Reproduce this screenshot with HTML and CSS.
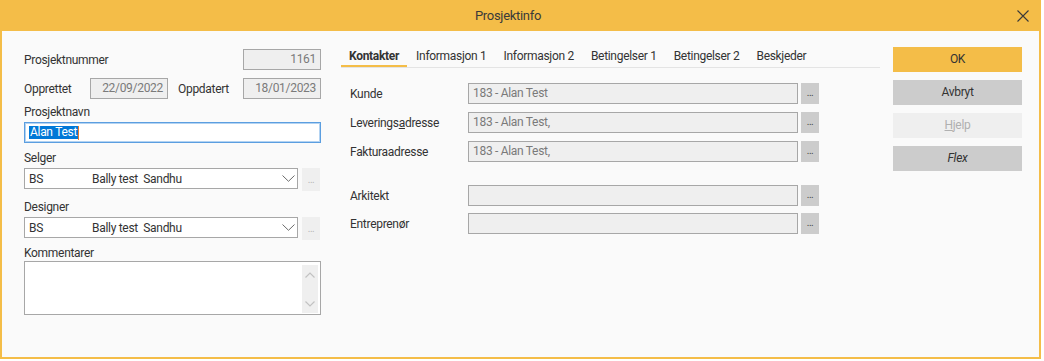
FILE: index.html
```html
<!DOCTYPE html>
<html lang="no">
<head>
<meta charset="UTF-8">
<title>Prosjektinfo</title>
<link rel="stylesheet" href="styles.css">
</head>
<body>

<div class="window">
    <div class="titlebar">
        <div class="title">Prosjektinfo</div>
        <div class="close">
            <svg width="12" height="12" viewBox="0 0 12 12"><path d="M0.5 0.5 L11.5 11.5 M11.5 0.5 L0.5 11.5" stroke="#3a3a3a" stroke-width="1.1" fill="none"/></svg>
        </div>
    </div>

    <div class="content">
        <!-- ─── left: project fields ─── -->
        <div class="left">
            <div class="row">
                <span class="lbl">Prosjektnummer</span>
                <div class="ro num">1161</div>
            </div>
            <div class="row r2">
                <span class="lbl w-opp">Opprettet</span>
                <div class="ro date">22/09/2022</div>
                <span class="lbl gap-l">Oppdatert</span>
                <div class="ro date push">18/01/2023</div>
            </div>

            <div class="lbl block m5">Prosjektnavn</div>
            <div class="edit focus"><span class="sel">Alan Test</span><span class="caret"></span></div>

            <div class="lbl block m7">Selger</div>
            <div class="combo-row">
                <div class="combo">
                    <span class="code">BS</span><span class="name">Bally test&nbsp; Sandhu</span>
                    <svg class="chev" width="13" height="7" viewBox="0 0 13 7"><path d="M0.5 0.5 L6.5 6.3 L12.5 0.5" stroke="#6b6b6b" stroke-width="1" fill="none"/></svg>
                </div>
                <div class="dots off">...</div>
            </div>

            <div class="lbl block m8">Designer</div>
            <div class="combo-row">
                <div class="combo">
                    <span class="code">BS</span><span class="name">Bally test&nbsp; Sandhu</span>
                    <svg class="chev" width="13" height="7" viewBox="0 0 13 7"><path d="M0.5 0.5 L6.5 6.3 L12.5 0.5" stroke="#6b6b6b" stroke-width="1" fill="none"/></svg>
                </div>
                <div class="dots off">...</div>
            </div>

            <div class="lbl block m5 tight">Kommentarer</div>
            <div class="memo">
                <div class="scroll">
                    <svg width="10" height="6" viewBox="0 0 10 6"><path d="M0.5 5.5 L5 1 L9.5 5.5" stroke="#c2c2c2" stroke-width="1.2" fill="none"/></svg>
                    <svg width="10" height="6" viewBox="0 0 10 6"><path d="M0.5 0.5 L5 5 L9.5 0.5" stroke="#c2c2c2" stroke-width="1.2" fill="none"/></svg>
                </div>
            </div>
        </div>

        <!-- ─── middle: tabs ─── -->
        <div class="middle">
            <div class="tabs">
                <span class="tab active">Kontakter</span>
                <span class="tab">Informasjon 1</span>
                <span class="tab">Informasjon 2</span>
                <span class="tab">Betingelser 1</span>
                <span class="tab">Betingelser 2</span>
                <span class="tab">Beskjeder</span>
            </div>

            <div class="group g1">
                <div class="crow"><span class="lbl">Kunde</span><div class="ro wide">183 - Alan Test</div><div class="dots">...</div></div>
                <div class="crow"><span class="lbl">Levering<span>s</span><u>a</u>dresse</span><div class="ro wide">183 - Alan Test,</div><div class="dots">...</div></div>
                <div class="crow"><span class="lbl">Fakturaadresse</span><div class="ro wide">183 - Alan Test,</div><div class="dots">...</div></div>
            </div>
            <div class="group g2">
                <div class="crow"><span class="lbl">Arkitekt</span><div class="ro wide"></div><div class="dots">...</div></div>
                <div class="crow"><span class="lbl">Entreprenør</span><div class="ro wide"></div><div class="dots">...</div></div>
            </div>
        </div>

        <!-- ─── right: buttons ─── -->
        <div class="actions">
            <div class="btn ok">OK</div>
            <div class="btn">Avbryt</div>
            <div class="btn disabled"><u>H</u>jelp</div>
            <div class="btn"><i>Flex</i></div>
        </div>
    </div>
</div>

</body>
</html>
```

FILE: styles.css
```css
/* ─── Base ───────────────────────────────────────────────────── */
*{box-sizing:border-box;margin:0}
body{background:#fff;font-family:Roboto,"Noto Sans",sans-serif;font-size:12px;letter-spacing:-.3px;color:#333}

/* ─── Window ─────────────────────────────────────────────────── */
.window{
    width:1041px;height:359px;
    border:2px solid #f4bd48;border-top:0;
    display:flex;flex-direction:column;
}
.titlebar{height:31px;background:#f4bd48;display:flex;align-items:center}
.title{flex:1;text-align:center;font-size:13px;color:#3a3a3a;margin-left:-2px}
.close{width:12px;height:12px;margin:0 10px 0 1px;display:flex}

.content{flex:1;background:#fafafa;display:flex;padding:18px 0 0 22px}

/* ─── Shared fields ──────────────────────────────────────────── */
.lbl{line-height:16px;white-space:nowrap}
.lbl.block{display:block;margin-bottom:2px}
.lbl.block.tight{margin-bottom:0}
.m5{margin-top:5px}.m7{margin-top:7px}.m8{margin-top:8px}
.ro{
    height:21px;line-height:19px;
    border:1px solid #a7a7a7;background:#efefef;color:#7a7a7a;
    padding:0 4px;white-space:nowrap;overflow:hidden;
}
.dots{
    width:18px;height:21px;background:#ccc;color:#444;
    font-size:10px;line-height:19px;text-align:center;letter-spacing:-.5px;
}
.dots.off{height:23px;background:#efefef;color:#b5b5b5;line-height:24px}

/* ─── Left column ───────────────────────────────────────────── */
.left{width:297px;display:flex;flex-direction:column}
.row{display:flex;align-items:center;justify-content:space-between;height:21px}
.row.r2{margin-top:8px;justify-content:flex-start}
.num{width:78px;text-align:right}
.date{width:78px;text-align:right}
.w-opp{width:66px}
.gap-l{margin-left:10px}
.push{margin-left:auto}

.edit{
    height:21px;background:#fff;
    border:1px solid #5b9ee0;box-shadow:inset 0 0 0 1px #b3d3f2;
    padding:2px 4px;display:flex;align-items:center;
}
.sel{background:#0078d7;color:#fff;line-height:13px;padding:0 1px}
.caret{width:1px;height:14px;background:#e8782a}

.combo-row{display:flex;gap:4px;align-items:flex-start;height:23px}
.combo{
    width:274px;height:21px;background:#fff;border:1px solid #a7a7a7;
    display:flex;align-items:center;padding:0 0 0 4px;
}
.code{width:63px}
.name{flex:1}
.chev{margin-right:2px}

.memo{height:54px;background:#fff;border:1px solid #a7a7a7;display:flex;justify-content:flex-end;padding:3px 2px 1px 0}
.scroll{
    width:16px;background:#efefef;
    display:flex;flex-direction:column;justify-content:space-between;align-items:center;
    padding:7px 0 6px;
}

/* ─── Middle / tabs ─────────────────────────────────────────── */
.middle{width:539px;margin-left:20px}
.tabs{display:flex;margin-top:-1px;border-bottom:1px solid #e4e4e4;height:20px}
.tab{
    line-height:16px;padding:0 8px 2px;margin-right:1px;
    border-bottom:2px solid transparent;color:#333;
}
.tab.active{border-bottom-color:#f4bd48;font-weight:bold}

.group{display:flex;flex-direction:column}
.g1{margin-top:15px;gap:8px}
.g2{margin-top:23px;gap:7px}
.crow{display:flex;align-items:center;padding-left:9px;height:21px}
.crow .lbl{width:118px}
.ro.wide{width:330px;margin-right:3px}

/* ─── Right / buttons ───────────────────────────────────────── */
.actions{width:129px;margin-left:13px;margin-top:-2px;display:flex;flex-direction:column;gap:8px}
.btn{height:25px;line-height:25px;text-align:center;background:#ccc;color:#333}
.btn.ok{background:#f4bd48}
.btn.disabled{background:#efefef;color:#b0b0b0}
```
